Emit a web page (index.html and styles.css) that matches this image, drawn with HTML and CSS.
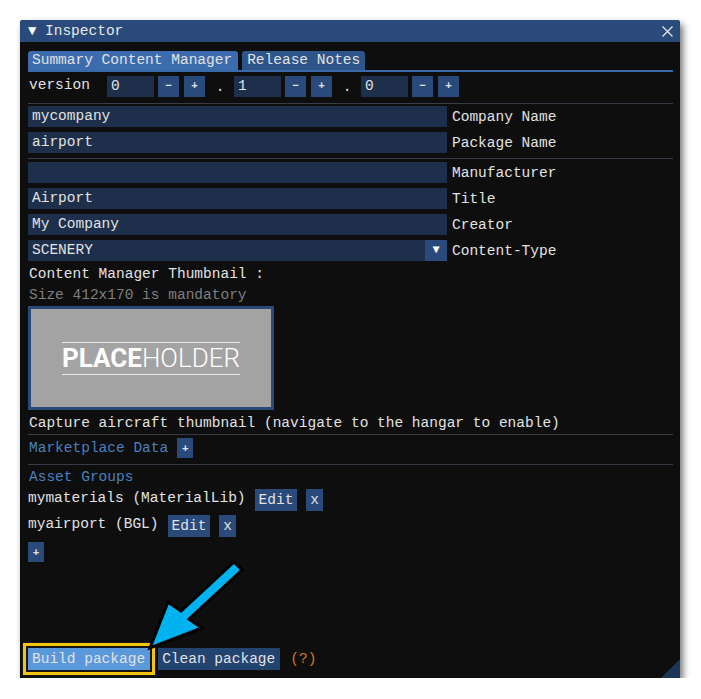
FILE: index.html
```html
<!DOCTYPE html>
<html>
<head>
    <title>Inspector</title>
    <link rel="stylesheet" href="styles.css">
</head>
<body>
    <div class="window">
        <div class="titlebar">
            <span class="collapse">&#9660;</span>
            <span class="title">Inspector</span>
            <svg class="close" width="11" height="11" viewBox="0 0 11 11">
                <path d="M0.5 0.5 L10.5 10.5 M10.5 0.5 L0.5 10.5" stroke="#e8e8e8" stroke-width="1.3"/>
            </svg>
        </div>
        <div class="content">
            <div class="tabbar">
                <div class="tab active">Summary Content Manager</div>
                <div class="tab">Release Notes</div>
            </div>

            <div class="version-row">
                <span class="version-label">version</span>
                <div class="num-input">0</div>
                <div class="step">&minus;</div>
                <div class="step">+</div>
                <span class="dot">.</span>
                <div class="num-input">1</div>
                <div class="step">&minus;</div>
                <div class="step">+</div>
                <span class="dot">.</span>
                <div class="num-input">0</div>
                <div class="step">&minus;</div>
                <div class="step">+</div>
            </div>

            <div class="sep sep-first"></div>

            <div class="field"><div class="input">mycompany</div><span class="label">Company Name</span></div>
            <div class="field"><div class="input">airport</div><span class="label">Package Name</span></div>

            <div class="sep"></div>

            <div class="field"><div class="input"></div><span class="label">Manufacturer</span></div>
            <div class="field"><div class="input">Airport</div><span class="label">Title</span></div>
            <div class="field"><div class="input">My Company</div><span class="label">Creator</span></div>
            <div class="field">
                <div class="combo">
                    <div class="combo-value">SCENERY</div>
                    <div class="combo-arrow">&#9660;</div>
                </div>
                <span class="label">Content-Type</span>
            </div>

            <div class="text-line thumb-title">Content Manager Thumbnail :</div>
            <div class="text-line muted">Size 412x170 is mandatory</div>

            <div class="thumbnail">
                <div class="placeholder"><b>PLACE</b>HOLDER</div>
            </div>

            <div class="text-line">Capture aircraft thumbnail (navigate to the hangar to enable)</div>

            <div class="sep sep-tight"></div>

            <div class="item-row market">
                <span class="heading">Marketplace Data</span>
                <div class="btn small">+</div>
            </div>

            <div class="sep sep-market"></div>

            <div class="text-line heading">Asset Groups</div>
            <div class="item-row group">
                <span>mymaterials (MaterialLib)</span>
                <div class="btn">Edit</div>
                <div class="btn">x</div>
            </div>
            <div class="item-row group">
                <span>myairport (BGL)</span>
                <div class="btn">Edit</div>
                <div class="btn">x</div>
            </div>
            <div class="item-row add">
                <div class="btn small">+</div>
            </div>

            <div class="bottom-row">
                <div class="btn big highlighted">Build package</div>
                <div class="btn big">Clean package</div>
                <span class="help">(?)</span>
            </div>
        </div>
        <div class="grip"></div>
    </div>

    <svg class="pointer" width="701" height="699" viewBox="0 0 701 699">
        <polygon points="234,562 181,611 168,602 150,648 202,628 189,619 242,570"
                 fill="#00b2f0" stroke="#000" stroke-width="3" stroke-linejoin="miter"/>
    </svg>
</body>
</html>
```

FILE: styles.css
```css
body {
    margin: 0;
    padding: 20px 0 0 20px;
    background-color: #fff;
    font-family: "Liberation Mono", "DejaVu Sans Mono", monospace;
    font-size: 14.5px;
    color: #e2e2e2;
}

.window {
    position: relative;
    width: 660px;
    height: 658px;
    background-color: #0e0e0e;
    border-radius: 3px 3px 0 0;
    box-shadow: 3px 4px 7px rgba(0, 0, 0, 0.55);
    display: flex;
    flex-direction: column;
}

.titlebar {
    height: 22px;
    background-color: #294a7a;
    border-radius: 3px 3px 0 0;
    display: flex;
    align-items: center;
    padding: 0 7px 0 8px;
}

.collapse {
    font-size: 14px;
    color: #fff;
    width: 17px;
}

.title {
    flex: 1;
    color: #e8e8e8;
}

.content {
    flex: 1;
    display: flex;
    flex-direction: column;
    padding: 9px 7px 8px 8px;
}

.tabbar {
    display: flex;
    gap: 4px;
    border-bottom: 2px solid #3a69a8;
    height: 19px;
}

.tab {
    height: 19px;
    line-height: 19px;
    padding: 0 5px;
    background-color: #2d5589;
    border-radius: 3px 3px 0 0;
}

.tab.active {
    background-color: #3c6cae;
    padding: 0 6px 0 4px;
}

.version-row {
    display: flex;
    align-items: center;
    height: 21px;
    margin-top: 4px;
}

.version-label {
    width: 78px;
    padding-left: 1px;
    margin-top: -4px;
}

.num-input {
    width: 43px;
    height: 21px;
    line-height: 21px;
    padding-left: 4px;
    background-color: #1d2f4a;
    margin-right: 4px;
}

.step {
    width: 21px;
    height: 21px;
    line-height: 21px;
    text-align: center;
    font-size: 11px;
    font-weight: bold;
    background-color: #294a7a;
    margin-right: 5px;
}

.dot {
    width: 20px;
    text-align: center;
    margin-right: 4px;
}

.sep {
    height: 1px;
    background-color: #3b3b48;
    margin: 5px 0 3px;
}

.sep-first {
    margin: 6px 0 2px;
}

.sep-tight {
    margin: 0 0 3px;
}

.sep-market {
    margin: 6px 0 2px;
}

.field {
    display: flex;
    align-items: center;
    height: 21px;
}

.field + .field {
    margin-top: 5px;
}

.input {
    width: 415px;
    height: 21px;
    line-height: 21px;
    padding-left: 4px;
    background-color: #1d2f4a;
}

.combo {
    width: 419px;
    height: 21px;
    display: flex;
}

.combo-value {
    flex: 1;
    line-height: 21px;
    padding-left: 4px;
    background-color: #1d2f4a;
}

.combo-arrow {
    width: 22px;
    line-height: 21px;
    text-align: center;
    font-size: 12px;
    color: #fff;
    background-color: #294a7a;
}

.label {
    margin-left: 5px;
}

.text-line {
    height: 21px;
    line-height: 21px;
    padding-left: 1px;
}

.thumb-title {
    margin-top: 3px;
}

.muted {
    color: #7f7f7f;
}

.heading {
    color: #4a80bf;
}

.thumbnail {
    width: 240px;
    height: 98px;
    border: 3px solid #294a7a;
    background-color: #a3a3a3;
    display: flex;
    align-items: center;
    justify-content: center;
    margin-bottom: 3px;
}

.placeholder {
    font-family: Roboto, "Open Sans", sans-serif;
    font-weight: 300;
    font-size: 26px;
    color: #fff;
    border-top: 1px solid #e6e6e6;
    border-bottom: 1px solid #e6e6e6;
    padding: 2px 0;
    line-height: 27px;
}

.placeholder b {
    font-weight: 700;
}

.item-row {
    display: flex;
    align-items: center;
    gap: 9px;
}

.market {
    height: 20px;
    padding-left: 1px;
}

.group {
    height: 22px;
    margin-top: 1px;
    margin-bottom: 3px;
}

.group span {
    margin-top: -4px;
}

.add {
    height: 20px;
    margin-top: 2px;
}

.btn {
    background-color: #294a7a;
    height: 22px;
    line-height: 22px;
    padding: 0 4px;
}

.btn.small {
    width: 16px;
    height: 20px;
    line-height: 22px;
    padding: 0;
    text-align: center;
    font-size: 11px;
    font-weight: bold;
}

.bottom-row {
    margin-top: auto;
    display: flex;
    align-items: center;
    gap: 8px;
}

.btn.big {
    padding: 0 5px 0 4px;
    background-color: #244470;
}

.btn.highlighted {
    background-color: #5a98dc;
    box-shadow: 0 0 0 2px #151515, 0 0 0 5px #f4c40c, 0 0 0 6px #1a1a1a;
}

.help {
    color: #d07a1e;
    margin-left: 2px;
}

.grip {
    position: absolute;
    right: 0;
    bottom: 0;
    width: 0;
    height: 0;
    border-left: 19px solid transparent;
    border-bottom: 19px solid #1d3657;
}

.pointer {
    position: absolute;
    left: 0;
    top: 0;
    pointer-events: none;
}
```
